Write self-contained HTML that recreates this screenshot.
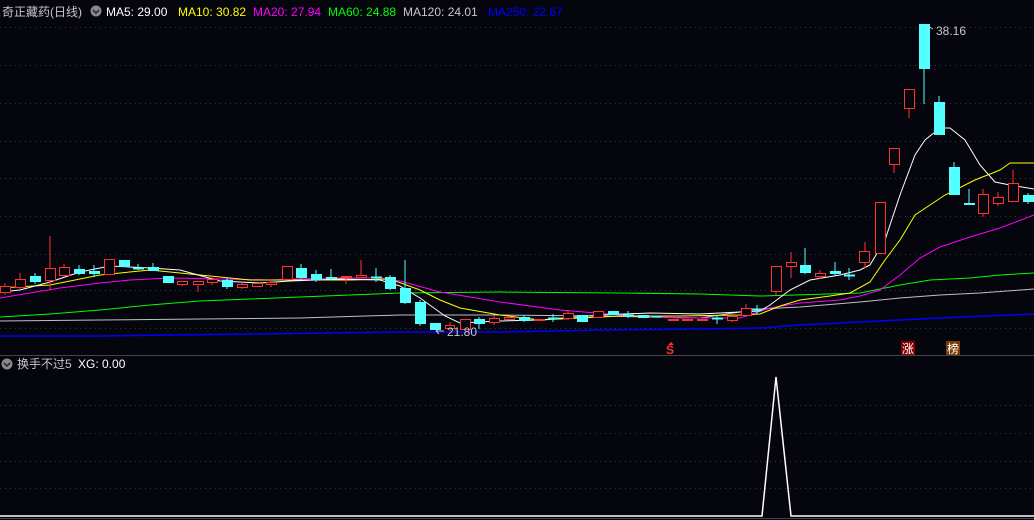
<!DOCTYPE html>
<html><head><meta charset="utf-8"><style>
html,body{margin:0;padding:0;background:#05050d;width:1034px;height:520px;overflow:hidden}
svg{display:block}
text{font-family:"Liberation Sans","Noto Sans CJK SC",sans-serif;font-size:12px}
</style></head><body>
<svg width="1034" height="520" xmlns="http://www.w3.org/2000/svg">
<rect width="1034" height="520" fill="#05050d"/>
<g stroke="#3a3a3a" stroke-dasharray="1,4" stroke-width="1">
<line x1="0" y1="27.5" x2="1034" y2="27.5"/><line x1="0" y1="65.5" x2="1034" y2="65.5"/>
<line x1="0" y1="103.5" x2="1034" y2="103.5"/><line x1="0" y1="141.5" x2="1034" y2="141.5"/>
<line x1="0" y1="178.5" x2="1034" y2="178.5"/><line x1="0" y1="216.5" x2="1034" y2="216.5"/>
<line x1="0" y1="254.5" x2="1034" y2="254.5"/><line x1="0" y1="290.5" x2="1034" y2="290.5"/>
<line x1="0" y1="328.5" x2="1034" y2="328.5"/>
<line x1="0" y1="405.5" x2="1034" y2="405.5"/><line x1="0" y1="433.5" x2="1034" y2="433.5"/>
<line x1="0" y1="461.5" x2="1034" y2="461.5"/><line x1="0" y1="488.5" x2="1034" y2="488.5"/>
</g>
<line x1="0" y1="355.5" x2="1034" y2="355.5" stroke="#444" stroke-width="1"/>
<line x1="0" y1="518.5" x2="1034" y2="518.5" stroke="#444" stroke-width="1"/>

<!-- MA lines -->
<g fill="none" stroke-width="1">
<polyline stroke="#0000ff" stroke-width="1.5" points="0,336 100,336 250,334 400,332 500,332 600,330 700,329 760,328 800,325 860,322 900,320 960,317 1034,314"/>
<polyline stroke="#c0c0c0" points="0,321 100,320 200,319 300,318 400,315 500,315 600,316 700,318 760,309 800,307 860,302 900,298 940,295 980,293 1034,289"/>
<polyline stroke="#00ff00" points="0,317 50,314 100,310 150,305 200,301 250,299 300,297 350,295 400,293 500,292 620,293 700,294 760,296 860,293 900,285 930,280 970,278 1000,275 1034,273"/>
<polyline stroke="#ff00ff" points="0,298 30,293 60,288 100,283 130,280 170,278 220,279 270,280 330,278 380,278 400,281 440,292 500,302 560,310 620,315 680,318 740,318 770,308 800,303 840,300 860,296 880,290 900,275 920,258 940,247 970,237 1000,228 1034,215"/>
<polyline stroke="#ffff00" points="0,288 50,285 100,275 150,270 200,275 250,280 300,280 350,280 390,279 420,290 440,300 460,308 500,315 540,320 580,318 620,316 680,316 740,315 760,314 780,306 800,300 830,296 850,293 870,282 885,260 900,240 915,215 930,205 945,195 975,180 1000,170 1010,163 1034,163"/>
<polyline stroke="#ffffff" points="0,292 20,290 50,282 80,272 110,266 150,268 180,270 220,281 260,283 290,281 340,279 380,280 400,286 420,298 445,316 460,323 500,321 540,320 600,315 650,313 700,314 760,311 770,305 790,290 810,280 840,275 860,270 870,265 885,240 900,195 915,155 925,140 940,128 950,128 965,140 980,165 995,182 1010,185 1034,189"/>
</g>

<!-- red candles (hollow) -->
<g fill="#05050d" stroke="#ff3232" stroke-width="1">
<line x1="5" y1="283" x2="5" y2="295"/><rect x="0.5" y="286.5" width="10" height="6"/>
<line x1="20" y1="273" x2="20" y2="290"/><rect x="15.5" y="279.5" width="10" height="8"/>
<line x1="50" y1="236" x2="50" y2="290"/><rect x="45.5" y="268.5" width="10" height="12"/>
<line x1="64" y1="264" x2="64" y2="277"/><rect x="59.5" y="267.5" width="10" height="8"/>
<rect x="104.5" y="259.5" width="10" height="15"/>
<line x1="182" y1="281" x2="182" y2="286"/><rect x="177.5" y="281.5" width="10" height="3"/>
<line x1="198" y1="281" x2="198" y2="292"/><rect x="193.5" y="281.5" width="10" height="3"/>
<line x1="212" y1="276" x2="212" y2="285"/><rect x="207.5" y="279.5" width="10" height="3"/>
<line x1="242" y1="283" x2="242" y2="289"/><rect x="237.5" y="284.5" width="10" height="3"/>
<rect x="252.5" y="283.5" width="10" height="3"/>
<line x1="271" y1="279" x2="271" y2="287"/><rect x="266.5" y="282.5" width="10" height="2"/>
<rect x="282.5" y="266.5" width="10" height="13"/>
<line x1="346" y1="276" x2="346" y2="284"/><rect x="341.5" y="276.5" width="10" height="1"/>
<line x1="361" y1="260" x2="361" y2="277"/><rect x="356.5" y="275.5" width="10" height="2"/>
<line x1="450" y1="322" x2="450" y2="331"/><rect x="445.5" y="325.5" width="9" height="3"/>
<rect x="460.5" y="319.5" width="10" height="10"/>
<line x1="494" y1="315" x2="494" y2="325"/><rect x="489.5" y="318.5" width="10" height="4"/>
<rect x="504.5" y="317.5" width="10" height="2"/>
<rect x="534.5" y="319.5" width="10" height="1"/>
<line x1="568" y1="310" x2="568" y2="320"/><rect x="563.5" y="313.5" width="10" height="5"/>
<rect x="593.5" y="311.5" width="10" height="6"/>
<rect x="668.5" y="319.5" width="10" height="1"/>
<rect x="682.5" y="319.5" width="10" height="1"/>
<rect x="697.5" y="319.5" width="10" height="1"/>
<line x1="732" y1="314" x2="732" y2="322"/><rect x="727.5" y="316.5" width="10" height="4"/>
<line x1="746" y1="304" x2="746" y2="317"/><rect x="741.5" y="308.5" width="10" height="7"/>
<line x1="776" y1="266" x2="776" y2="295"/><rect x="771.5" y="266.5" width="10" height="25"/>
<line x1="791" y1="252" x2="791" y2="278"/><rect x="786.5" y="262.5" width="10" height="4"/>
<line x1="820" y1="270" x2="820" y2="279"/><rect x="815.5" y="273.5" width="10" height="3"/>
<line x1="865" y1="242" x2="865" y2="268"/><rect x="859.5" y="251.5" width="10" height="11"/>
<rect x="875.5" y="202.5" width="10" height="51"/>
<line x1="894" y1="164" x2="894" y2="173"/><rect x="889.5" y="148.5" width="10" height="16"/>
<line x1="909" y1="108" x2="909" y2="118"/><rect x="904.5" y="89.5" width="10" height="19"/>
<line x1="983" y1="189" x2="983" y2="217"/><rect x="978.5" y="194.5" width="10" height="19"/>
<line x1="998" y1="192" x2="998" y2="206"/><rect x="993.5" y="197.5" width="10" height="6"/>
<line x1="1013" y1="170" x2="1013" y2="201"/><rect x="1008.5" y="183.5" width="10" height="18"/>
</g>

<!-- cyan candles (filled) -->
<g fill="#54ffff" stroke="#54ffff" stroke-width="1">
<line x1="35" y1="273" x2="35" y2="284"/><rect x="30.5" y="276.5" width="10" height="5"/>
<line x1="79" y1="265" x2="79" y2="275"/><rect x="74.5" y="269.5" width="10" height="4"/>
<line x1="94" y1="265" x2="94" y2="277"/><rect x="89.5" y="271.5" width="10" height="2"/>
<rect x="119.5" y="260.5" width="10" height="6"/>
<line x1="138" y1="264" x2="138" y2="270"/><rect x="133.5" y="268" width="10" height="1"/>
<line x1="153" y1="263" x2="153" y2="271"/><rect x="148.5" y="267.5" width="10" height="3"/>
<rect x="163.5" y="276.5" width="10" height="6"/>
<line x1="227" y1="278" x2="227" y2="289"/><rect x="222.5" y="280.5" width="10" height="6"/>
<line x1="301" y1="264" x2="301" y2="279"/><rect x="296.5" y="268.5" width="10" height="9"/>
<line x1="316" y1="270" x2="316" y2="282"/><rect x="311.5" y="274.5" width="10" height="5"/>
<line x1="331" y1="269" x2="331" y2="280"/><rect x="326.5" y="277.5" width="10" height="1"/>
<line x1="376" y1="268" x2="376" y2="282"/><rect x="371.5" y="277" width="10" height="1"/>
<line x1="390" y1="275" x2="390" y2="290"/><rect x="385.5" y="277.5" width="10" height="11"/>
<line x1="405" y1="260" x2="405" y2="304"/><rect x="400.5" y="288.5" width="10" height="14"/>
<line x1="420" y1="300" x2="420" y2="326"/><rect x="415.5" y="302.5" width="10" height="21"/>
<rect x="430.5" y="323.5" width="10" height="6"/>
<line x1="479" y1="317" x2="479" y2="329"/><rect x="474.5" y="319.5" width="10" height="4"/>
<line x1="524" y1="315" x2="524" y2="322"/><rect x="519.5" y="317.5" width="10" height="3"/>
<line x1="553" y1="314" x2="553" y2="322"/><rect x="548.5" y="318" width="10" height="1"/>
<rect x="577.5" y="315.5" width="10" height="6"/>
<rect x="608.5" y="311.5" width="10" height="3"/>
<line x1="628" y1="311" x2="628" y2="318"/><rect x="623.5" y="315" width="10" height="1"/>
<rect x="638.5" y="315.5" width="10" height="2"/>
<rect x="652.5" y="316" width="8" height="1"/>
<line x1="717" y1="315" x2="717" y2="324"/><rect x="712.5" y="318" width="10" height="1"/>
<line x1="757" y1="305" x2="757" y2="314"/><rect x="752.5" y="309" width="10" height="1"/>
<line x1="805" y1="248" x2="805" y2="274"/><rect x="800.5" y="265.5" width="10" height="7"/>
<line x1="835" y1="262" x2="835" y2="276"/><rect x="830.5" y="271.5" width="10" height="2"/>
<line x1="849" y1="268" x2="849" y2="280"/><rect x="844.5" y="275" width="10" height="1"/>
<line x1="924" y1="24" x2="924" y2="104"/><rect x="919.5" y="24.5" width="10" height="44"/>
<line x1="939" y1="96" x2="939" y2="135"/><rect x="934.5" y="102.5" width="10" height="32"/>
<line x1="954" y1="162" x2="954" y2="195"/><rect x="949.5" y="167.5" width="10" height="27"/>
<line x1="969" y1="189" x2="969" y2="205"/><rect x="964.5" y="203.5" width="10" height="1"/>
<line x1="1028" y1="193" x2="1028" y2="204"/><rect x="1023.5" y="195.5" width="10" height="6"/>
</g>

<!-- labels -->
<text x="936" y="35" fill="#c8c8c8" font-size="12">38.16</text>
<path d="M926,25 L933,29" stroke="#c8c8c8" fill="none"/>
<text x="447" y="336" fill="#c8c8c8" font-size="12">21.80</text>
<path d="M436,331 L444,331 M436,331 L439,328 M436,331 L439,334" stroke="#c8c8c8" fill="none"/>
<text x="666" y="354" fill="#ff3030" font-size="12" font-weight="bold">S</text>
<path d="M668,345 L671,342 L674,345Z" fill="#ff3030"/>
<rect x="901" y="341" width="14" height="14" fill="#8a0000"/>
<text x="902" y="353" fill="#ffffff" font-size="12">涨</text>
<rect x="946" y="341" width="14" height="14" fill="#7a3a00"/>
<text x="947" y="353" fill="#ffffff" font-size="12">榜</text>

<!-- lower indicator -->
<polyline fill="none" stroke="#ffffff" stroke-width="1.5" points="0,516 762,516 776,377 791,516 1034,516"/>

<!-- header -->
<text x="2" y="16" fill="#c8c8c8" font-size="13">奇正藏药(日线)</text>
<circle cx="96" cy="11" r="5.5" fill="#888"/><path d="M93,10 L96,13 L99,10" stroke="#222" fill="none" stroke-width="1.5"/>
<text x="106" y="16" fill="#ffffff" font-size="13">MA5: 29.00</text>
<text x="178" y="16" fill="#ffff00" font-size="13">MA10: 30.82</text>
<text x="253" y="16" fill="#ff00ff" font-size="13">MA20: 27.94</text>
<text x="328" y="16" fill="#00ff00" font-size="13">MA60: 24.88</text>
<text x="403" y="16" fill="#c8c8c8" font-size="13">MA120: 24.01</text>
<text x="488" y="16" fill="#0000ff" font-size="13">MA250: 22.67</text>

<circle cx="7" cy="364" r="5.5" fill="#888"/><path d="M4,363 L7,366 L10,363" stroke="#222" fill="none" stroke-width="1.5"/>
<text x="17" y="368" fill="#c8c8c8" font-size="13">换手不过5</text>
<text x="78" y="368" fill="#ffffff" font-size="13">XG: 0.00</text>
</svg>
</body></html>
